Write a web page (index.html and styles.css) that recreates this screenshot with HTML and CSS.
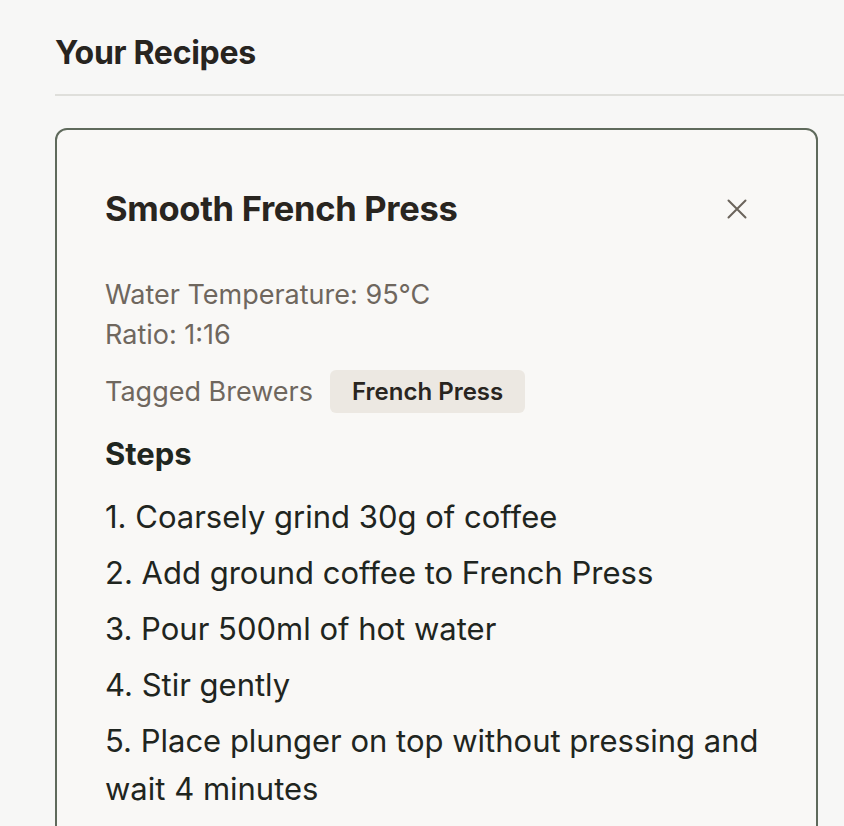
FILE: index.html
```html
<!DOCTYPE html>
<html lang="en">
<head>
    <meta charset="UTF-8">
    <meta name="viewport" content="width=device-width, initial-scale=1.0">
    <title>Your Recipes</title>
    <link rel="stylesheet" href="styles.css">
</head>
<body>
    <main class="recipes-page">
        <h2 class="section-title">Your Recipes</h2>

        <article class="recipe-card">
            <header class="recipe-header">
                <h3 class="recipe-name">Smooth French Press</h3>
                <button class="close-button" aria-label="Close">
                    <svg width="20" height="20" viewBox="0 0 20 20" fill="none" stroke="currentColor" stroke-width="2" stroke-linecap="round">
                        <path d="M1.5 1.5 L18.5 18.5 M18.5 1.5 L1.5 18.5"/>
                    </svg>
                </button>
            </header>

            <div class="recipe-meta">
                <p>Water Temperature: 95°C</p>
                <p>Ratio: 1:16</p>
            </div>

            <div class="brewers">
                <span class="brewers-label">Tagged Brewers</span>
                <span class="brewer-tag">French Press</span>
            </div>

            <h4 class="steps-title">Steps</h4>
            <ol class="steps">
                <li>1. Coarsely grind 30g of coffee</li>
                <li>2. Add ground coffee to French Press</li>
                <li>3. Pour 500ml of hot water</li>
                <li>4. Stir gently</li>
                <li>5. Place plunger on top without pressing and wait 4 minutes</li>
            </ol>
        </article>
    </main>
</body>
</html>
```

FILE: styles.css
```css
* {
    margin: 0;
    padding: 0;
    box-sizing: border-box;
}

body {
    font-family: Inter, "Noto Sans", sans-serif;
    background: #f7f7f6;
    color: #1f2520;
    overflow: hidden;
}

.recipes-page {
    padding: 33px 0 0 55px;
}

.section-title {
    font-size: 32px;
    line-height: 40px;
    font-weight: 700;
    color: #27241f;
    letter-spacing: -0.3px;
    padding-bottom: 21px;
    border-bottom: 2px solid #dfdfdb;
}

.recipe-card {
    margin-top: 32px;
    width: 763px;
    min-height: 760px;
    background: #f9f8f6;
    border: 2px solid #5f6a5c;
    border-radius: 12px;
    padding: 57px 48px 0 48px;
}

.recipe-header {
    display: flex;
    align-items: center;
    justify-content: space-between;
    padding-right: 21px;
}

.recipe-name {
    font-size: 34.5px;
    line-height: 44px;
    font-weight: 700;
    color: #29251f;
    letter-spacing: -0.3px;
}

.close-button {
    background: none;
    border: none;
    color: #6b645b;
    display: flex;
    padding: 0;
    cursor: pointer;
}

.recipe-meta {
    margin-top: 44px;
    font-size: 27px;
    line-height: 40px;
    color: #6f675e;
}

.brewers {
    margin-top: 15px;
    display: flex;
    align-items: center;
    gap: 17px;
}

.brewers-label {
    font-size: 27px;
    color: #6f675e;
}

.brewer-tag {
    background: #ece8e2;
    border-radius: 6px;
    padding: 7px 22px;
    font-size: 24px;
    font-weight: 600;
    color: #29251f;
}

.steps-title {
    margin-top: 21px;
    font-size: 31px;
    line-height: 40px;
    font-weight: 700;
    color: #1f2620;
}

.steps {
    list-style: none;
    margin-top: 19px;
    font-size: 31px;
    line-height: 48px;
    color: #1f2520;
}

.steps li {
    margin-bottom: 8px;
}
```
